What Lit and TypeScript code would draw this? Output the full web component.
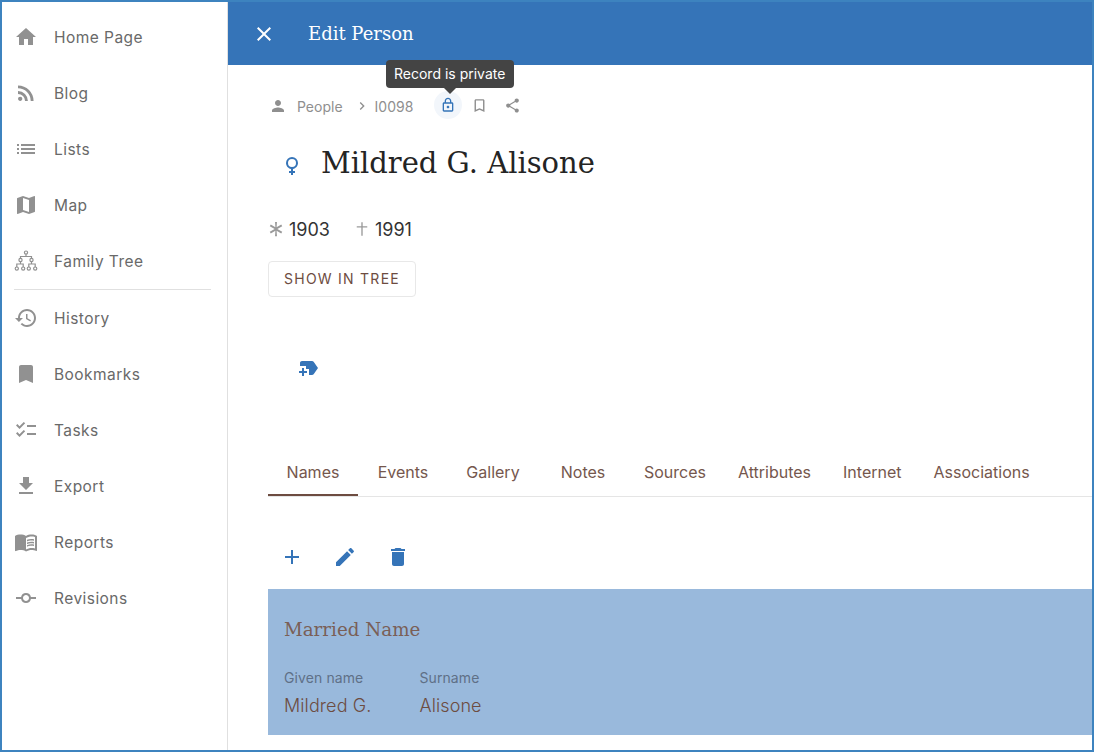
import { LitElement, html, css, svg } from "lit";
import { customElement } from "lit/decorators.js";

const paths: Record<string, string> = {
  home: "M10,20V14H14V20H19V12H22L12,3L2,12H5V20H10Z",
  rss: "M6.18,15.64A2.18,2.18 0 0,1 8.36,17.82C8.36,19 7.38,20 6.18,20C5,20 4,19 4,17.82A2.18,2.18 0 0,1 6.18,15.64M4,4.44A15.56,15.56 0 0,1 19.56,20H16.73A12.73,12.73 0 0,0 4,7.27V4.44M4,10.1A9.9,9.9 0 0,1 13.9,20H11.07A7.07,7.07 0 0,0 4,12.93V10.1Z",
  list: "M3 13h2v-2H3v2zm0 4h2v-2H3v2zm0-8h2V7H3v2zm4 4h14v-2H7v2zm0 4h14v-2H7v2zM7 7v2h14V7H7z",
  map: "M20.5 3l-.16.03L15 5.1 9 3 3.36 4.9c-.21.07-.36.25-.36.48V20.5c0 .28.22.5.5.5l.16-.03L9 18.9l6 2.1 5.64-1.9c.21-.07.36-.25.36-.48V3.5c0-.28-.22-.5-.5-.5zM15 19l-6-2.11V5l6 2.11V19z",
  history: "M13 3c-4.97 0-9 4.03-9 9H1l3.89 3.89.07.14L9 12H6c0-3.87 3.13-7 7-7s7 3.13 7 7-3.13 7-7 7c-1.93 0-3.68-.79-4.94-2.06l-1.42 1.42C8.27 19.99 10.51 21 13 21c4.97 0 9-4.03 9-9s-4.03-9-9-9zm-1 5v5l4.28 2.54.72-1.21-3.5-2.08V8H12z",
  bookmark: "M17 3H7c-1.1 0-1.99.9-1.99 2L5 21l7-3 7 3V5c0-1.1-.9-2-2-2z",
  tasks: "M22 7h-9v2h9V7zm0 8h-9v2h9v-2zM5.54 11 2 7.46l1.41-1.41 2.12 2.12 4.24-4.24 1.41 1.41L5.54 11zm0 8L2 15.46l1.41-1.41 2.12 2.12 4.24-4.24 1.41 1.41L5.54 19z",
  download: "M19 9h-4V3H9v6H5l7 7 7-7zM5 18v2h14v-2H5z",
  book: "M21 5c-1.11-.35-2.33-.5-3.5-.5-1.95 0-4.05.4-5.5 1.5-1.45-1.1-3.55-1.5-5.5-1.5S2.45 4.9 1 6v14.65c0 .25.25.5.5.5.1 0 .15-.05.25-.05C3.1 20.45 5.05 20 6.5 20c1.95 0 4.05.4 5.5 1.5 1.35-.85 3.8-1.5 5.5-1.5 1.65 0 3.35.3 4.75 1.05.1.05.15.05.25.05.25 0 .5-.25.5-.5V6c-.6-.45-1.25-.75-2-1zm0 13.5c-1.1-.35-2.3-.5-3.5-.5-1.7 0-4.15.65-5.5 1.5V8c1.35-.85 3.8-1.5 5.5-1.5 1.2 0 2.4.15 3.5.5v11.5zM17.5 10.5c.88 0 1.73.09 2.5.26V9.24c-.79-.15-1.64-.24-2.5-.24-1.7 0-3.24.29-4.5.83v1.66c1.13-.64 2.7-.99 4.5-.99zM13 12.49v1.66c1.13-.64 2.7-.99 4.5-.99.88 0 1.73.09 2.5.26V11.9c-.79-.15-1.64-.24-2.5-.24-1.7 0-3.24.3-4.5.83zM17.5 14.33c-1.7 0-3.24.29-4.5.83v1.66c1.13-.64 2.7-.99 4.5-.99.88 0 1.73.09 2.5.26v-1.52c-.79-.16-1.64-.24-2.5-.24z",
  commit: "M16.9 11a5 5 0 0 0-9.8 0H2v2h5.1a5 5 0 0 0 9.8 0H22v-2h-5.1zM12 15c-1.66 0-3-1.34-3-3s1.34-3 3-3 3 1.34 3 3-1.34 3-3 3z",
  close: "M19 6.41L17.59 5 12 10.59 6.41 5 5 6.41 10.59 12 5 17.59 6.41 19 12 13.41 17.59 19 19 17.59 13.41 12z",
  person: "M12 12c2.21 0 4-1.79 4-4s-1.79-4-4-4-4 1.79-4 4 1.79 4 4 4zm0 2c-2.67 0-8 1.34-8 4v2h16v-2c0-2.66-5.33-4-8-4z",
  chevron: "M8.59 16.59L13.17 12 8.59 7.41 10 6l6 6-6 6z",
  lock: "M18 8h-1V6c0-2.76-2.24-5-5-5S7 3.24 7 6v2H6c-1.1 0-2 .9-2 2v10c0 1.1.9 2 2 2h12c1.1 0 2-.9 2-2V10c0-1.1-.9-2-2-2zM9 6c0-1.66 1.34-3 3-3s3 1.34 3 3v2H9V6zm9 14H6V10h12v10zm-6-3c1.1 0 2-.9 2-2s-.9-2-2-2-2 .9-2 2 .9 2 2 2z",
  bookmarkBorder: "M17 3H7c-1.1 0-1.99.9-1.99 2L5 21l7-3 7 3V5c0-1.1-.9-2-2-2zm0 15l-5-2.18L7 18V5h10v13z",
  share: "M18 16.08c-.76 0-1.44.3-1.96.77L8.91 12.7c.05-.23.09-.46.09-.7s-.04-.47-.09-.7l7.05-4.11c.54.5 1.25.81 2.04.81 1.66 0 3-1.34 3-3s-1.34-3-3-3-3 1.34-3 3c0 .24.04.47.09.7L8.04 9.81C7.5 9.31 6.79 9 6 9c-1.66 0-3 1.34-3 3s1.34 3 3 3c.79 0 1.5-.31 2.04-.81l7.12 4.16c-.05.21-.08.43-.08.65 0 1.61 1.31 2.92 2.92 2.92 1.61 0 2.92-1.31 2.92-2.92s-1.31-2.92-2.92-2.92z",
  female: "M12,4A6,6 0 0,1 18,10C18,12.97 15.84,15.44 13,15.92V18H15V20H13V22H11V20H9V18H11V15.92C8.16,15.44 6,12.97 6,10A6,6 0 0,1 12,4M12,6A4,4 0 0,0 8,10A4,4 0 0,0 12,14A4,4 0 0,0 16,10A4,4 0 0,0 12,6Z",
  birth: "M10.7 2.5h2.6l-.5 7.2 6.2-3.6 1.3 2.2L13.8 12l6.5 3.7-1.3 2.2-6.2-3.6.5 7.2h-2.6l.5-7.2-6.2 3.6-1.3-2.2 6.5-3.7-6.5-3.7 1.3-2.2 6.2 3.6z",
  death: "M11.1 3h1.8v5.3H19v1.8h-6.1V21h-1.8V10.1H5V8.3h6.1z",
  newLabel: "M21 12l-4.37 6.16C16.26 18.68 15.65 19 15 19h-3l0-6H9v-3H3V7c0-1.1.9-2 2-2h10c.65 0 1.26.31 1.63.84L21 12zM10 15H7v-3H5v3H2v2h3v3h2v-3h3V15z",
  plus: "M19 13h-6v6h-2v-6H5v-2h6V5h2v6h6v2z",
  pencil: "M3 17.25V21h3.75L17.81 9.94l-3.75-3.75L3 17.25zM20.71 7.04c.39-.39.39-1.02 0-1.41l-2.34-2.34c-.39-.39-1.02-.39-1.41 0l-1.83 1.83 3.75 3.75 1.83-1.83z",
  trash: "M6 19c0 1.1.9 2 2 2h8c1.1 0 2-.9 2-2V7H6v12zM19 4h-3.5l-1-1h-5l-1 1H5v2h14V4z",
};

const icon = (name: string, size = 24) =>
  html`<svg width=${size} height=${size} viewBox="0 0 24 24" fill="currentColor">
    ${svg`<path d=${paths[name]}></path>`}
  </svg>`;

// family tree has no stock icon, so it is built from small rings and links
const treeIcon = html`<svg width="24" height="24" viewBox="0 0 24 24" fill="none" stroke="currentColor" stroke-width="1.2">
  <circle cx="12" cy="3.6" r="1.6"></circle>
  <circle cx="6.5" cy="11" r="1.6"></circle>
  <circle cx="17.5" cy="11" r="1.6"></circle>
  <circle cx="2.8" cy="19.6" r="1.6"></circle>
  <circle cx="9.2" cy="19.6" r="1.6"></circle>
  <circle cx="14.8" cy="19.6" r="1.6"></circle>
  <circle cx="21.2" cy="19.6" r="1.6"></circle>
  <path d="M12 5.2V7.5M6.5 9.4V7.5H17.5V9.4M6.5 12.6V15M2.8 18V15H9.2V18M17.5 12.6V15M14.8 18V15H21.2V18"></path>
</svg>`;

const navTop = [
  ["home", "Home Page"],
  ["rss", "Blog"],
  ["list", "Lists"],
  ["map", "Map"],
  ["tree", "Family Tree"],
];
const navBottom = [
  ["history", "History"],
  ["bookmark", "Bookmarks"],
  ["tasks", "Tasks"],
  ["download", "Export"],
  ["book", "Reports"],
  ["commit", "Revisions"],
];
const tabs = ["Names", "Events", "Gallery", "Notes", "Sources", "Attributes", "Internet", "Associations"];

@customElement("app-root")
export class AppRoot extends LitElement {
  static styles = css`
    :host {
      display: flex;
      box-sizing: border-box;
      width: 1094px;
      height: 752px;
      border: 2px solid #3d83bf;
      overflow: hidden;
      background: #fff;
      font-family: Inter, "Liberation Sans", sans-serif;
    }

    svg {
      display: block;
    }

    .side {
      box-sizing: border-box;
      flex: none;
      width: 226px;
      padding-top: 7px;
      border-right: 1px solid #e0e0e0;
    }

    .nav-item {
      display: flex;
      align-items: center;
      height: 56px;
      padding-left: 12px;
      color: #696969;
      font-size: 15.5px;
      letter-spacing: 0.45px;
    }

    .nav-item svg {
      flex: none;
      margin-right: 16px;
      color: #919191;
    }

    .divider {
      height: 1px;
      margin: 0 16px 0 12px;
      background: #e0e0e0;
    }

    .main {
      flex: 1;
      min-width: 0;
      position: relative;
    }

    .bar {
      display: flex;
      align-items: center;
      height: 63px;
      padding-left: 24px;
      background: #3574b8;
      color: #fff;
    }

    .bar h1 {
      margin: 0 0 0 32px;
      font-family: "DejaVu Serif", serif;
      font-size: 18px;
      font-weight: 400;
    }

    .body {
      padding-left: 40px;
    }

    .crumbs {
      display: flex;
      align-items: center;
      height: 34px;
      margin-top: 24px;
      color: #8f8f8f;
      font-size: 14px;
    }

    .crumbs .person {
      margin-right: 10px;
      margin-left: 1px;
    }

    .crumbs .sep {
      margin: 0 5px 0 11px;
    }

    .lock {
      display: flex;
      align-items: center;
      justify-content: center;
      width: 28px;
      height: 28px;
      margin: -2px 9px 0 21px;
      border-radius: 50%;
      background: #f2f6fb;
      color: #3574b8;
    }

    .mark {
      margin: -2px 16px 0 0;
    }

    .share {
      margin-top: -2px;
    }

    .tip {
      position: absolute;
      left: 158px;
      top: 58px;
      width: 112px;
      padding: 0 8px;
      height: 28px;
      line-height: 28px;
      border-radius: 4px;
      background: #444;
      color: #fff;
      font-size: 14px;
      white-space: nowrap;
    }

    .tip::after {
      content: "";
      position: absolute;
      left: 58px;
      top: 28px;
      border: 6px solid transparent;
      border-top-color: #444;
      border-bottom: 0;
    }

    .title {
      display: flex;
      align-items: center;
      margin-top: 16px;
      height: 48px;
      color: #242424;
    }

    .title svg {
      margin: 3px 17px 0 12px;
      color: #3574b8;
    }

    .title h2 {
      margin: 0;
      font-family: "DejaVu Serif", serif;
      font-size: 29px;
      font-weight: 400;
    }

    .dates {
      display: flex;
      align-items: center;
      margin-top: 30px;
      height: 24px;
      color: #333;
      font-size: 18px;
    }

    .dates svg {
      color: #9a9a9a;
      margin-left: -1px;
      margin-right: 4px;
    }

    .dates span {
      margin-right: 24px;
    }

    .show-tree {
      display: block;
      box-sizing: border-box;
      margin-top: 20px;
      width: 148px;
      height: 36px;
      padding: 0 0 2px;
      border: 1px solid #e8e8e8;
      border-radius: 4px;
      background: #fff;
      color: #6d4c41;
      font-family: inherit;
      font-size: 14px;
      font-weight: 400;
      letter-spacing: 1.25px;
    }

    .tag {
      margin: 59px 0 0 29px;
      color: #3574b8;
    }

    .tabs {
      display: flex;
      margin-top: 68px;
      height: 48px;
      border-bottom: 1px solid #e5e5e5;
    }

    .tab {
      box-sizing: border-box;
      min-width: 90px;
      height: 48px;
      padding: 0 16px;
      line-height: 49px;
      text-align: center;
      color: #75574d;
      font-size: 16px;
    }

    .tab.active {
      border-bottom: 2px solid #6d4c41;
    }

    .actions {
      display: flex;
      gap: 5px;
      margin-top: 36px;
      color: #3574b8;
    }

    .actions div {
      display: flex;
      align-items: center;
      justify-content: center;
      width: 48px;
      height: 48px;
    }

    .card {
      box-sizing: border-box;
      margin-top: 8px;
      height: 146px;
      padding: 28px 16px 0;
      background: #99b9dc;
      color: #6d4c41;
    }

    .card h3 {
      margin: 0;
      height: 26px;
      line-height: 26px;
      font-family: "DejaVu Serif", serif;
      font-size: 18.3px;
      font-weight: 300;
      color: #7a5f57;
    }

    .fields {
      display: flex;
      gap: 48px;
      margin-top: 27px;
    }

    .label {
      color: #5f7087;
      font-size: 14px;
      line-height: 16px;
      letter-spacing: 0.1px;
    }

    .value {
      margin-top: 8px;
      font-size: 18px;
      line-height: 24px;
      font-weight: 300;
      letter-spacing: 0.1px;
    }
  `;

  navRow([name, label]: string[]) {
    return html`<div class="nav-item">
      ${name === "tree" ? treeIcon : icon(name)}<span>${label}</span>
    </div>`;
  }

  render() {
    return html`
      <aside class="side">
        ${navTop.map((n) => this.navRow(n))}
        <div class="divider"></div>
        ${navBottom.map((n) => this.navRow(n))}
      </aside>
      <div class="main">
        <header class="bar">${icon("close")}<h1>Edit Person</h1></header>
        <div class="tip">Record is private</div>
        <div class="body">
          <div class="crumbs">
            <span class="person">${icon("person", 18)}</span>
            <span>People</span>
            <span class="sep">${icon("chevron", 16)}</span>
            <span>I0098</span>
            <span class="lock">${icon("lock", 16)}</span>
            <span class="mark">${icon("bookmarkBorder", 17)}</span>
            <span class="share">${icon("share", 17)}</span>
          </div>
          <div class="title">${icon("female")}<h2>Mildred G. Alisone</h2></div>
          <div class="dates">
            ${icon("birth", 18)}<span>1903</span>
            ${icon("death", 18)}<span>1991</span>
          </div>
          <button class="show-tree">SHOW IN TREE</button>
          <div class="tag">${icon("newLabel", 24)}</div>
          <div class="tabs">
            ${tabs.map((t, i) => html`<div class="tab ${i === 0 ? "active" : ""}">${t}</div>`)}
          </div>
          <div class="actions">
            <div>${icon("plus")}</div>
            <div>${icon("pencil")}</div>
            <div>${icon("trash")}</div>
          </div>
          <section class="card">
            <h3>Married Name</h3>
            <div class="fields">
              <div><div class="label">Given name</div><div class="value">Mildred G.</div></div>
              <div><div class="label">Surname</div><div class="value">Alisone</div></div>
            </div>
          </section>
        </div>
      </div>
    `;
  }
}
